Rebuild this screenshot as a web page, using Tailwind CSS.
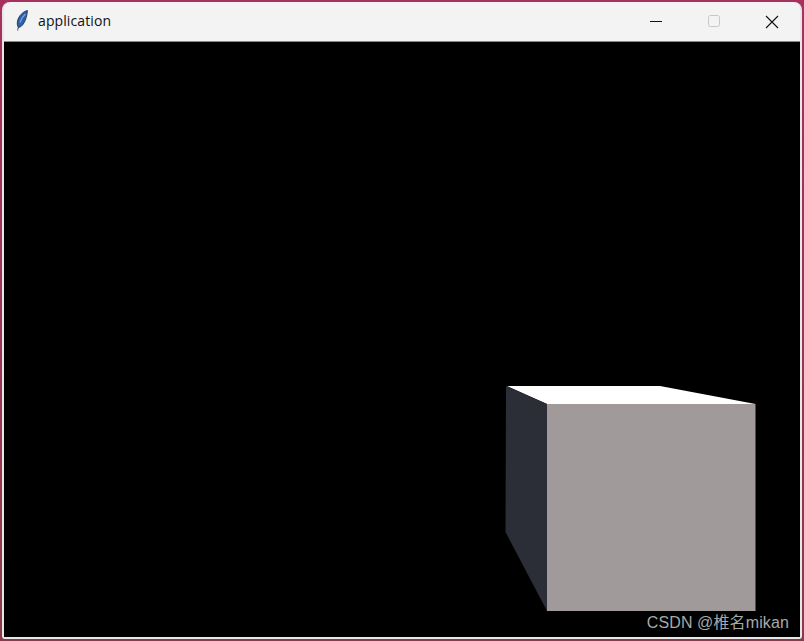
<!DOCTYPE html>
<html lang="en">
<head>
  <meta charset="UTF-8" />
  <title>application</title>
  <script src="https://cdn.jsdelivr.net/npm/@tailwindcss/browser@4"></script>
</head>
<body class="w-[804px] h-[641px] overflow-hidden bg-gradient-to-b from-[#a8305f] to-[#8a3a4a]">

  <!-- Window -->
  <div class="ml-[2px] mt-[2px] w-[800px] h-[637px] flex flex-col rounded-t-lg rounded-b-[3px] bg-[#f3f3f3] border-x-2 border-b-2 border-[#e8e8e8]">

    <!-- Title bar -->
    <div class="h-[40px] pb-[2px] shrink-0 flex items-center border-b border-[#8a8a8a] font-['Open_Sans',sans-serif] text-[14px] tracking-[0.1px] text-[#111]">
      <svg class="ml-[9px] w-[18px] h-[22px]" viewBox="0 0 18 22">
        <path d="M5.500 17 L4.500 20.500" stroke="#6b7280" stroke-width="1.200" fill="none" />
        <path d="M14.500 0.500 C10 1.500 5.500 6 4.500 11 C4 14 4.300 16 5.500 17.500 C9.500 17 13.500 11 14.500 0.500 Z" fill="#2f5fa8" stroke="#1c2c4c" stroke-width="0.800" />
        <path d="M12.500 4 C10 6 8 9 7 12.500" stroke="#7ea8de" stroke-width="1.200" fill="none" />
      </svg>
      <span class="ml-[7px]">application</span>
      <div class="ml-auto flex items-center">
        <svg class="w-[58px] h-[16px]" viewBox="0 0 58 16"><path d="M23 8.500h12" stroke="#111" stroke-width="1" /></svg>
        <svg class="w-[58px] h-[16px]" viewBox="0 0 58 16"><rect x="23.500" y="2.500" width="11" height="11" rx="2" fill="none" stroke="#c8c8c8" /></svg>
        <svg class="w-[58px] h-[16px] -mr-[1px]" viewBox="0 0 58 16"><path d="M23 3l12 12M35 3L23 15" stroke="#111" stroke-width="1.100" /></svg>
      </div>
    </div>

    <!-- Canvas -->
    <div class="relative flex-1 bg-black">
      <svg class="absolute inset-0 w-full h-full" viewBox="4 42 796 595">
        <polygon points="507,386 660,386 755.500,404 547,404" fill="#ffffff" />
        <polygon points="506,386 547,404 547,611 505.500,532" fill="#2b2e36" />
        <rect x="547" y="404" width="208.500" height="207" fill="#a09a9a" />
      </svg>
      <span class="absolute right-[11px] bottom-[4px] text-[16px] leading-[20px] tracking-[0.12px] text-[#a8a8a8] font-['Liberation_Sans','Noto_Sans_CJK_SC',sans-serif]">CSDN @椎名mikan</span>
    </div>
  </div>

</body>
</html>
